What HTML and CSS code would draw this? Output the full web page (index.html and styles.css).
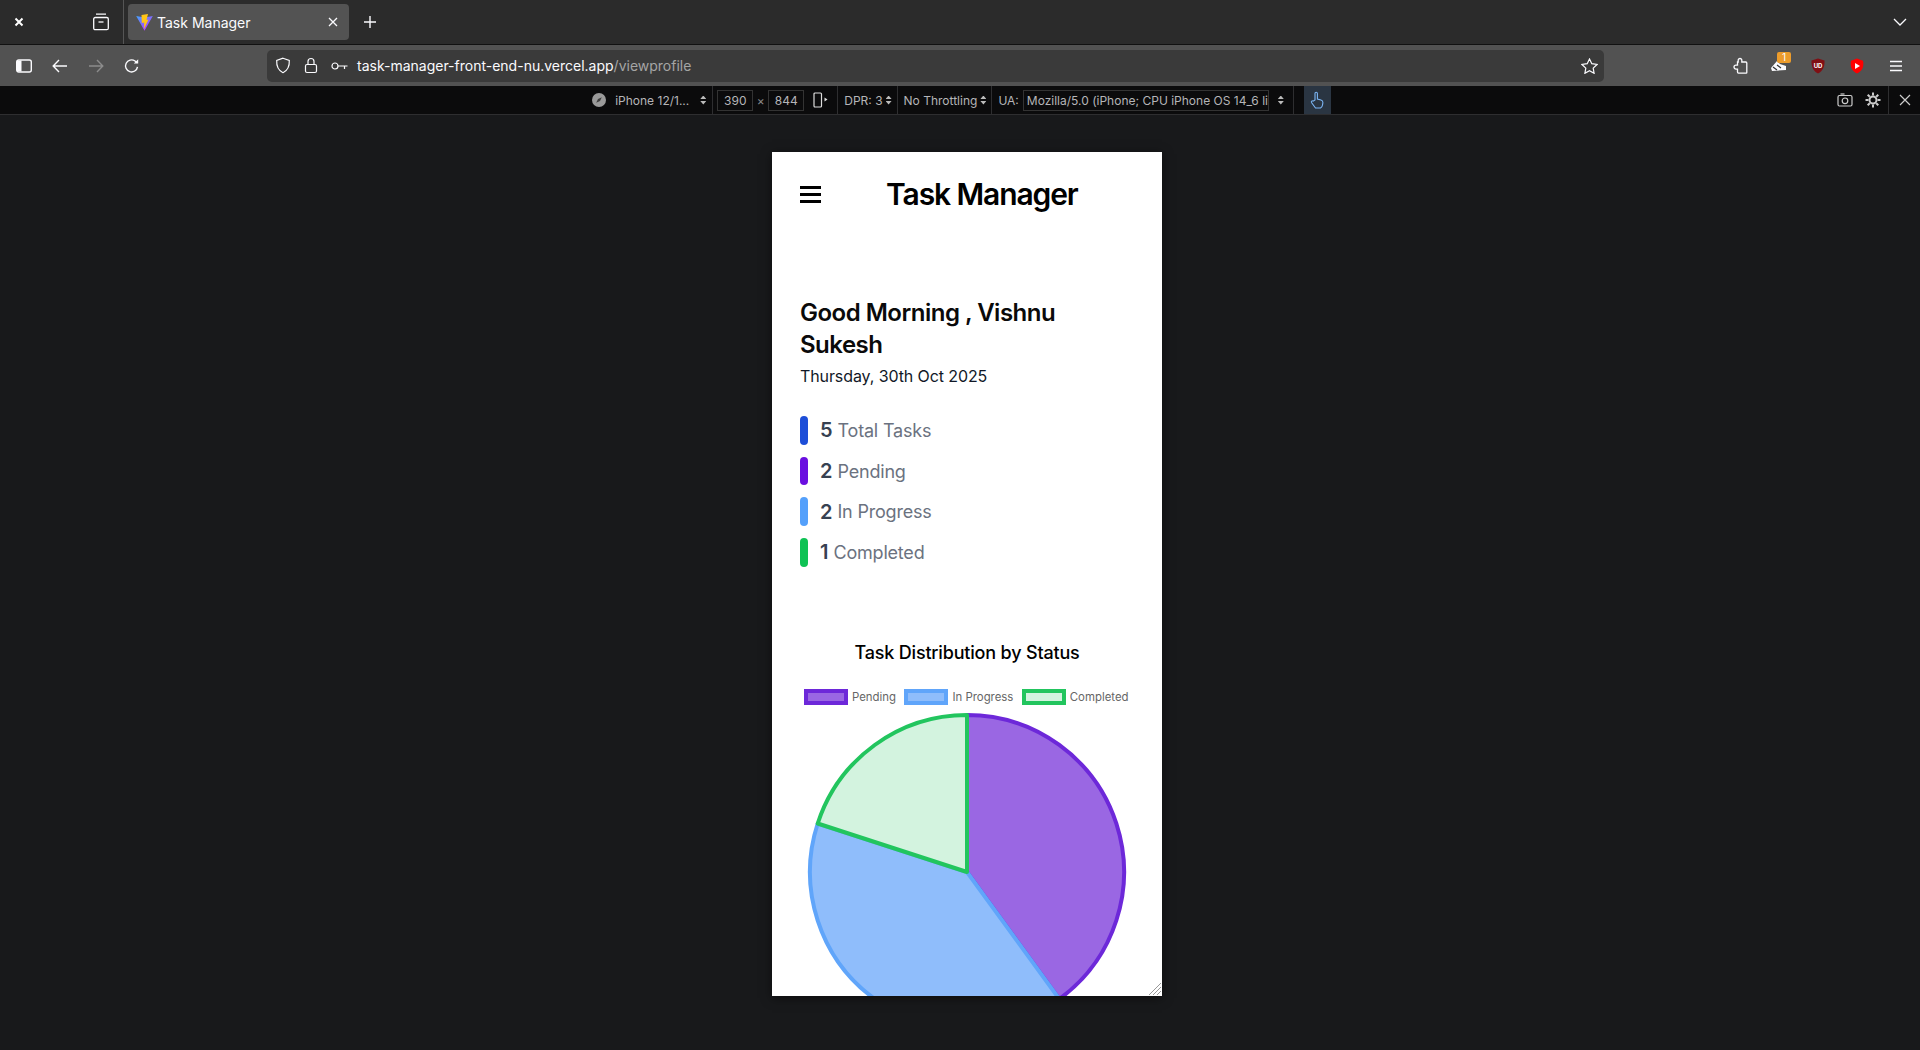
FILE: index.html
```html
<!DOCTYPE html>
<html lang="en">
  <head>
    <meta charset="UTF-8" />
    <meta name="viewport" content="width=device-width, initial-scale=1.0" />
    <title>Task Manager</title>
    <link rel="stylesheet" href="styles.css">
  </head>
  <body>
    <div class="tabbar">
      <svg class="close-window" width="12" height="12" viewBox="0 0 12 12"><path d="M2.5 2.5l7 7M9.5 2.5l-7 7" stroke="#fff" stroke-width="2"/></svg>
      <svg class="tabs-icon" width="18" height="18" viewBox="0 0 18 18" fill="none" stroke="#fbfbfe" stroke-width="1.3"><path d="M4 1.2h10M1.7 6a1.5 1.5 0 0 1 1.5-1.5h11.6A1.5 1.5 0 0 1 16.3 6v9.2a1.5 1.5 0 0 1-1.5 1.5H3.2a1.5 1.5 0 0 1-1.5-1.5z"/><path d="M6.5 9h5"/></svg>
      <div class="tab-sep"></div>
      <div class="tab">
        <svg width="17" height="17" viewBox="0 0 17 17"><defs><linearGradient id="vite" x1="0" y1="0" x2="0.7" y2="1"><stop offset="0" stop-color="#41a6ff"/><stop offset="1" stop-color="#bd34fe"/></linearGradient></defs><path d="M0.2 2L8.5 3.6 16.8 2 8.5 16.8z" fill="url(#vite)"/><path d="M5.500 1L12 0 10.500 6 12.500 5.500 8 15 8.200 8.600 5.800 9z" fill="#ffc517"/></svg>
        <span class="tab-title">Task Manager</span>
        <svg class="tab-close" width="10" height="10" viewBox="0 0 10 10"><path d="M1 1l8 8M9 1l-8 8" stroke="#fbfbfe" stroke-width="1.3"/></svg>
      </div>
      <svg class="new-tab" width="14" height="14" viewBox="0 0 14 14"><path d="M7 1v12M1 7h12" stroke="#fbfbfe" stroke-width="1.4"/></svg>
      <svg class="tab-list" width="14" height="8" viewBox="0 0 14 8" fill="none"><path d="M1 1l6 6 6-6" stroke="#fbfbfe" stroke-width="1.3"/></svg>
    </div>

    <div class="toolbar">
      <svg class="tool sidebar-btn" width="16" height="14" viewBox="0 0 16 14"><rect x="0.7" y="1" width="14.6" height="12" rx="2" fill="none" stroke="#fbfbfe" stroke-width="1.4"/><rect x="1" y="1.5" width="4.5" height="11" fill="#fbfbfe"/></svg>
      <svg class="tool" width="16" height="14" viewBox="0 0 16 14" fill="none" stroke="#fbfbfe" stroke-width="1.4"><path d="M15 7H1.5M7 1L1.2 7 7 13"/></svg>
      <svg class="tool" width="16" height="14" viewBox="0 0 16 14" fill="none" stroke="#8c8c8c" stroke-width="1.4"><path d="M1 7h13.5M9 1l5.8 6L9 13"/></svg>
      <svg class="tool" width="16" height="16" viewBox="0 0 16 16" fill="none" stroke="#fbfbfe" stroke-width="1.4"><path d="M13.5 8.8A6 6 0 1 1 11 3l2 1.6"/><path d="M14.2 1.2v4.4H9.8z" fill="#fbfbfe" stroke="none"/></svg>
      <div class="urlbar">
        <svg width="16" height="17" viewBox="0 0 16 17" fill="none" stroke="#fbfbfe" stroke-width="1.2"><path d="M8 1.2l6.3 2.2c.3 5.4-1.5 10-6.3 12.3C3.200 13.400 1.400 8.800 1.700 3.400z"/></svg>
        <svg class="url-lock" width="14" height="17" viewBox="0 0 14 17" fill="none" stroke="#fbfbfe" stroke-width="1.2"><rect x="1.500" y="7.500" width="11" height="8" rx="1.500"/><path d="M4 7.500V4.500a3 3 0 0 1 6 0v3"/></svg>
        <svg class="url-key" width="17" height="10" viewBox="0 0 17 10" fill="none" stroke="#fbfbfe" stroke-width="1.2"><circle cx="4" cy="5" r="3"/><path d="M7 5h9.500M13.500 5v3"/></svg>
        <span class="url-text">task-manager-front-end-nu.vercel.app<span class="url-path">/viewprofile</span></span>
        <svg class="url-star" width="17" height="16" viewBox="0 0 17 16" fill="none" stroke="#fbfbfe" stroke-width="1.2"><path d="M8.500 1l2.300 4.700 5.200.8-3.800 3.600.9 5.200-4.600-2.500-4.600 2.500.9-5.200L1 6.500l5.200-.8z"/></svg>
      </div>
      <div class="extensions">
        <svg width="15" height="17" viewBox="0 0 15 17" fill="none" stroke="#fbfbfe" stroke-width="1.300"><path d="M7 1.500a1.800 1.800 0 0 1 1.800 1.800V5h4a1 1 0 0 1 1 1v9.500a.6.6 0 0 1-.6.6H5.500a1 1 0 0 1-1-1v-3H3a2 2 0 0 1 0-4h1.500V5h.7V3.300A1.800 1.800 0 0 1 7 1.500z"/></svg>
        <div class="ext-shoe">
          <svg width="17" height="12" viewBox="0 0 17 12"><path d="M1 8l6-7 3 3 6 2v4l-14 1z" fill="#fbfbfe"/><path d="M3 7l4 3M7 5l4 3" stroke="#333" stroke-width="1.200"/></svg>
          <span class="ext-badge">1</span>
        </div>
        <svg width="14" height="16" viewBox="0 0 14 16"><path d="M7 .5l6.500 2c.3 6-1.500 10.500-6.500 13C2 13 .2 8.500.5 2.500z" fill="#800f14"/><text x="7" y="10" class="ublock-text">UD</text></svg>
        <svg width="16" height="16" viewBox="0 0 16 16"><path d="M8 .5l6 2.200c1.200 5.800-.8 10.300-6 12.800C2.800 13 .800 8.500 2 2.700z" fill="#f00"/><path d="M6 5l5 3-5 3z" fill="#fff"/></svg>
        <svg width="14" height="12" viewBox="0 0 14 12"><path d="M1 1.500h12M1 6h12M1 10.500h12" stroke="#fbfbfe" stroke-width="1.300"/></svg>
      </div>
    </div>

    <div class="rdm-bar">
      <div></div>
      <div class="rdm-controls">
        <svg class="rdm-compass" width="14" height="14" viewBox="0 0 14 14"><circle cx="7" cy="7" r="7" fill="#9a9a9a"/><path d="M9.800 4.200L8 8 4.200 9.800 6 6z" fill="#3d3d3d"/></svg>
        <span class="rdm-device">iPhone 12/1...</span>
        <span class="updown rdm-arrows"></span>
        <span class="rdm-sep first-sep"></span>
        <span class="size-input">390</span>
        <span class="rdm-times">×</span>
        <span class="size-input">844</span>
        <svg class="rdm-rotate" width="16" height="16" viewBox="0 0 16 16" fill="none" stroke="#ddd" stroke-width="1.200"><rect x="1" y="1" width="7.500" height="14" rx="1"/><path d="M11.500 5.500l3 2-3 2z" fill="#ddd" stroke="none"/></svg>
        <span class="rdm-sep"></span>
        <span class="rdm-label">DPR: 3</span>
        <span class="updown"></span>
        <span class="rdm-sep"></span>
        <span class="rdm-label">No Throttling</span>
        <span class="updown"></span>
        <span class="rdm-sep"></span>
        <span class="rdm-label">UA:</span>
        <span class="ua-input">Mozilla/5.0 (iPhone; CPU iPhone OS 14_6 li</span>
        <span class="updown ua-arrows"></span>
        <span class="rdm-sep"></span>
        <span class="touch-btn">
          <svg width="14" height="18" viewBox="0 0 14 18" fill="none" stroke="#7cb6f5" stroke-width="1.100"><path d="M5 9V2.500a1.200 1.200 0 0 1 2.400 0V8l3.600 1c1.300.4 2 1.300 1.900 2.600L12.500 14c-.2 1.500-1 2.500-2 3H5.500L1.500 11.500c-.6-1 .6-2.200 1.700-1.400z"/></svg>
        </span>
      </div>
      <div class="rdm-right">
        <svg class="rdm-camera" width="16" height="14" viewBox="0 0 16 14" fill="none" stroke="#ccc" stroke-width="1.200"><rect x="1" y="2.500" width="14" height="10.500" rx="1.500"/><circle cx="8" cy="7.800" r="2.800"/><path d="M3.500 1h4"/></svg>
        <svg class="rdm-gear" width="16" height="16" viewBox="0 0 16 16" fill="none" stroke="#ccc"><circle cx="8" cy="8" r="3.500" stroke-width="2"/><path d="M8 .5v3M8 12.500v3M.5 8h3M12.500 8h3M2.700 2.700l2.100 2.100M11.200 11.200l2.100 2.100M13.300 2.700l-2.100 2.100M4.800 11.200l-2.100 2.100" stroke-width="2"/></svg>
        <span class="rdm-right-sep"></span>
        <svg class="rdm-close" width="12" height="12" viewBox="0 0 12 12"><path d="M1 1l10 10M11 1L1 11" stroke="#ccc" stroke-width="1.200"/></svg>
      </div>
    </div>

    <div class="stage">
      <div class="phone">
        <header class="app-header">
          <svg width="21" height="19" viewBox="0 0 21 19"><path d="M0 2.500h21M0 9.500h21M0 16.500h21" stroke="#000" stroke-width="3"/></svg>
          <h1 class="app-title">Task Manager</h1>
        </header>

        <section class="welcome">
          <h2 class="greeting">Good Morning , Vishnu Sukesh</h2>
          <p class="date">Thursday, 30th Oct 2025</p>
        </section>

        <ul class="stats">
          <li class="stat"><span class="stat-bar total"></span><span class="stat-num">5</span><span class="stat-label">Total Tasks</span></li>
          <li class="stat"><span class="stat-bar pending"></span><span class="stat-num">2</span><span class="stat-label">Pending</span></li>
          <li class="stat"><span class="stat-bar progress"></span><span class="stat-num">2</span><span class="stat-label">In Progress</span></li>
          <li class="stat"><span class="stat-bar done"></span><span class="stat-num">1</span><span class="stat-label">Completed</span></li>
        </ul>

        <section class="chart">
          <h3 class="chart-title">Task Distribution by Status</h3>
          <div class="legend">
            <span class="swatch pending-swatch"></span><span class="legend-label">Pending</span>
            <span class="swatch progress-swatch"></span><span class="legend-label">In Progress</span>
            <span class="swatch done-swatch"></span><span class="legend-label">Completed</span>
          </div>
          <svg class="pie" width="390" height="330" viewBox="0 0 390 330" stroke-width="4" stroke-linejoin="round">
            <path d="M195 163V6A157 157 0 0 1 287.300 290Z" fill="#9a67e3" stroke="#6d28d9"/>
            <path d="M195 163L287.300 290A157 157 0 0 1 45.700 114.500Z" fill="#8fbdfb" stroke="#60a5fa"/>
            <path d="M195 163L45.700 114.500A157 157 0 0 1 195 6Z" fill="#d3f3df" stroke="#22c55e"/>
          </svg>
        </section>

        <svg class="resizer" width="14" height="14" viewBox="0 0 14 14"><path d="M13 1L1 13M13 5L5 13M13 9L9 13" stroke="#999" stroke-width="1"/></svg>
      </div>
    </div>
  </body>
</html>
```

FILE: styles.css
```css
* {
  box-sizing: border-box;
}

html,
body {
  height: 100%;
}

body {
  margin: 0;
  display: flex;
  flex-direction: column;
  overflow: hidden;
  background-color: #18191b;
  font-family: Inter, "Liberation Sans", sans-serif;
  color: #fbfbfe;
}

/* browser tabs */
.tabbar {
  height: 45px;
  flex: none;
  display: flex;
  align-items: center;
  background-color: #2b2b2b;
  border-bottom: 1px solid #111;
}

.close-window {
  margin-left: 13px;
}

.tabs-icon {
  margin-left: 67px;
}

.tab-sep {
  width: 1px;
  height: 44px;
  margin-left: 13px;
  background-color: #555;
}

.tab {
  width: 221px;
  height: 36px;
  margin-left: 4px;
  padding: 0 11px 0 8px;
  display: flex;
  align-items: center;
  background-color: #535353;
  border-radius: 4px;
}

.tab-title {
  margin-left: 4px;
  font-size: 14px;
  flex: 1;
}

.new-tab {
  margin-left: 14px;
}

.tab-list {
  margin-left: auto;
  margin-right: 13px;
}

/* address bar row */
.toolbar {
  height: 41px;
  flex: none;
  display: flex;
  align-items: center;
  padding-left: 16px;
  background-color: #525252;
}

.tool {
  margin-right: 20px;
}

.urlbar {
  width: 1337px;
  height: 32px;
  margin-left: 107px;
  padding: 0 6px 0 8px;
  display: flex;
  align-items: center;
  background-color: #3a3a3a;
  border-radius: 5px;
}

.url-lock {
  margin-left: 13px;
}

.url-key {
  margin-left: 13px;
}

.url-text {
  margin-left: 9px;
  font-size: 14px;
  flex: 1;
}

.url-path {
  color: #a5a5a5;
}

.extensions {
  flex: 1;
  display: flex;
  align-items: center;
  justify-content: space-between;
  padding: 0 17px 0 129px;
}

.ext-shoe {
  position: relative;
  display: flex;
  margin-left: -2px;
}

.ext-badge {
  position: absolute;
  top: -8px;
  right: -4px;
  width: 14px;
  height: 11px;
  background-color: #ed9c2b;
  border-radius: 2px;
  font-size: 10px;
  line-height: 11px;
  text-align: center;
}

.ublock-text {
  font-family: Inter, sans-serif;
  font-size: 6px;
  font-weight: 700;
  fill: #fff;
  text-anchor: middle;
}

/* responsive design mode bar */
.rdm-bar {
  height: 29px;
  flex: none;
  display: grid;
  grid-template-columns: 1fr auto 1fr;
  align-items: center;
  background-color: #0b0b0c;
  border-bottom: 1px solid #2e2e30;
  font-size: 12px;
  color: #b5b5b8;
}

.rdm-controls {
  display: flex;
  align-items: center;
  height: 28px;
  padding-left: 3px;
}

.rdm-device {
  margin-left: 9px;
}

.rdm-sep {
  width: 1px;
  height: 28px;
  margin: 0 6px 0 5px;
  background-color: #2e2e30;
}

.first-sep {
  margin: 0 4px 0 6px;
}

.size-input {
  width: 36px;
  height: 21px;
  border: 1px solid #333;
  line-height: 19px;
  text-align: center;
}

.rdm-times {
  width: 15px;
  text-align: center;
  color: #888;
}

.rdm-rotate {
  margin: 0 3px 0 9px;
}

.rdm-label {
  white-space: nowrap;
}

.updown {
  width: 6px;
  height: 9px;
  margin-left: 3px;
  display: inline-block;
  background-color: #bbb;
  clip-path: polygon(50% 0, 100% 40%, 0 40%, 0 60%, 100% 60%, 50% 100%, 0 60%, 0 40%);
}

.rdm-arrows {
  margin-left: 11px;
}

.ua-input {
  width: 246px;
  height: 21px;
  margin-left: 4px;
  padding-left: 3px;
  border: 1px solid #333;
  line-height: 19px;
  white-space: nowrap;
  overflow: hidden;
}

.ua-arrows {
  margin: 0 4px 0 9px;
}

.touch-btn {
  width: 27px;
  height: 28px;
  margin-left: 4px;
  display: flex;
  align-items: center;
  justify-content: center;
  background-color: #2a3542;
}

.rdm-right {
  display: flex;
  align-items: center;
  justify-content: flex-end;
  padding-right: 9px;
  height: 28px;
}

.rdm-camera {
  margin-right: 12px;
}

.rdm-right-sep {
  width: 1px;
  height: 28px;
  margin: 0 10px 0 7px;
  background-color: #2e2e30;
}

/* emulated phone */
.stage {
  flex: 1;
  display: flex;
  justify-content: center;
  padding: 37px 0 0 14px;
}

.phone {
  width: 390px;
  height: 844px;
  position: relative;
  overflow: hidden;
  background-color: #fff;
  color: #000;
  box-shadow: 0 2px 10px rgba(0, 0, 0, 0.5);
}

.app-header {
  display: flex;
  align-items: center;
  padding: 24px 28px 0;
}

.app-title {
  margin: 0 0 0 65px;
  font-size: 30px;
  line-height: 36px;
  font-weight: 600;
  letter-spacing: -1.1px;
}

.welcome {
  padding: 85px 28px 0;
}

.greeting {
  margin: 0;
  font-size: 24px;
  line-height: 32px;
  font-weight: 600;
  letter-spacing: -0.5px;
  color: #0a0a0a;
}

.date {
  margin: 3px 0 0;
  font-size: 16px;
  line-height: 24px;
  letter-spacing: -0.1px;
  color: #111827;
}

.stats {
  list-style: none;
  margin: 28px 0 0;
  padding: 0 28px;
  display: flex;
  flex-direction: column;
  gap: 12px;
}

.stat {
  height: 28.7px;
  display: flex;
  align-items: center;
}

.stat-bar {
  width: 8px;
  height: 100%;
  margin-right: 12px;
  border-radius: 4px;
}

.total {
  background-color: #1d4ed8;
}

.pending {
  background-color: #6a0fe0;
}

.progress {
  background-color: #54a0fb;
}

.done {
  background-color: #0ec254;
}

.stat-num {
  margin-right: 5px;
  font-size: 20px;
  font-weight: 600;
  color: #374151;
}

.stat-label {
  font-size: 18px;
  letter-spacing: -0.2px;
  color: #6b7280;
}

.chart {
  margin-top: 72px;
}

.chart-title {
  margin: 0;
  font-size: 18px;
  line-height: 28px;
  font-weight: 500;
  letter-spacing: -0.18px;
  text-align: center;
}

.legend {
  margin-top: 22.5px;
  padding-left: 32px;
  display: flex;
  align-items: center;
  height: 16px;
}

.swatch {
  width: 44px;
  height: 16px;
  border: 4px solid;
}

.pending-swatch {
  background-color: #9a67e3;
  border-color: #6d28d9;
}

.progress-swatch {
  background-color: #8fbdfb;
  border-color: #60a5fa;
}

.done-swatch {
  background-color: #d3f3df;
  border-color: #22c55e;
}

.legend-label {
  margin: 0 8.4px 0 4px;
  font-size: 11.4px;
  color: #666;
}

.pie {
  display: block;
  margin-top: 4px;
}

.resizer {
  position: absolute;
  right: 0;
  bottom: 0;
}
```
